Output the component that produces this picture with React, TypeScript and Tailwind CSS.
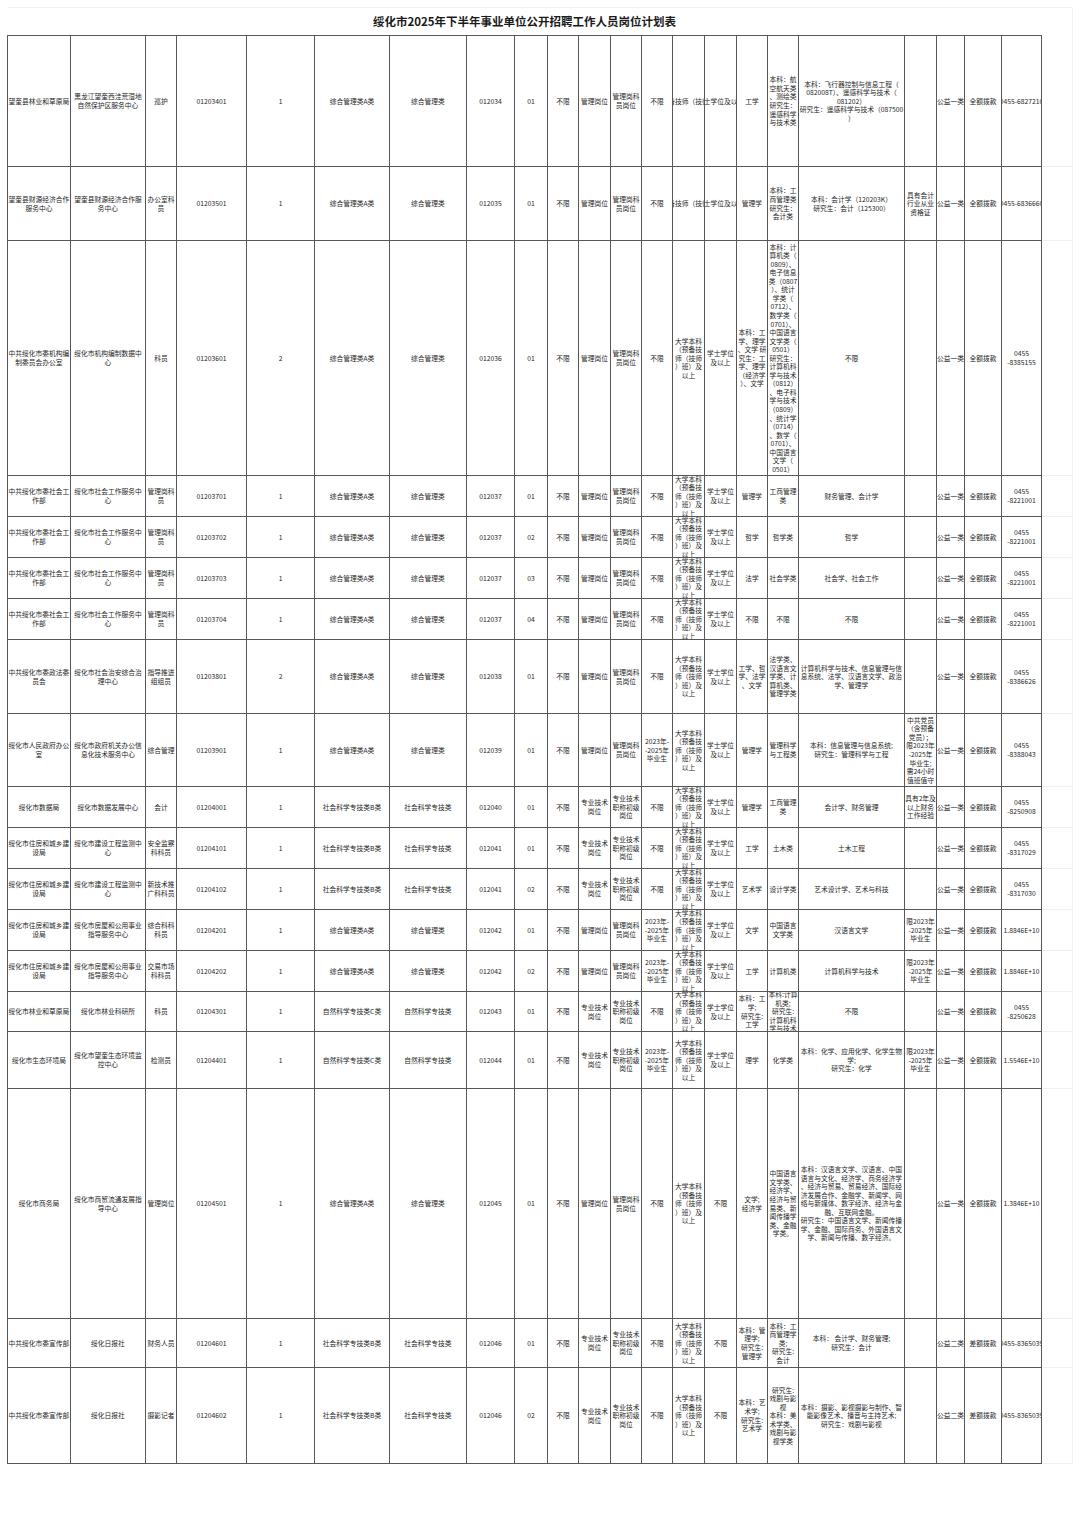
import React from 'react';

// 岗位计划表：每行 22 列，"\n" 为单元格内换行
const EDU1 = '大学本科（预备技师（技师）班）及以上';
const EDU = '大学本科\n（预备技\n师（技师\n）班）及\n以上';
const DEG = '学士学位\n及以上';
const GRAD = '2023年-\n-2025年\n毕业生';
const LIMIT_GRAD = '限2023年\n-2025年\n毕业生';
const GL = '管理岗科\n员岗位';
const ZJ = '专业技术\n岗位';
const ZC = '专业技术\n职称初级\n岗位';

const rows: string[][] = [
  ['望奎县林业和草原局', '黑龙江望奎西洼荒湿地\n自然保护区服务中心', '巡护', '01203401', '1', '综合管理类A类', '综合管理类', '012034', '01', '不限', '管理岗位', GL, '不限', EDU1, '学士学位及以上', '工学', '本科：航\n空航天类\n、测绘类\n研究生：\n遥感科学\n与技术类', '本科：飞行器控制与信息工程（\n082008T）、遥感科学与技术（\n081202）\n研究生：遥感科学与技术（087500\n）', '', '公益一类', '全额拨款', '0455-6827210'],
  ['望奎县财源经济合作\n服务中心', '望奎县财源经济合作服\n务中心', '办公室科\n员', '01203501', '1', '综合管理类A类', '综合管理类', '012035', '01', '不限', '管理岗位', GL, '不限', EDU1, '学士学位及以上', '管理学', '本科：工\n商管理类\n研究生：\n会计类', '本科：会计学（120203K）\n研究生：会计（125300）', '具有会计\n行业从业\n资格证', '公益一类', '全额拨款', '0455-6836660'],
  ['中共绥化市委机构编\n制委员会办公室', '绥化市机构编制数据中\n心', '科员', '01203601', '2', '综合管理类A类', '综合管理类', '012036', '01', '不限', '管理岗位', GL, '不限', EDU, DEG, '本科：工\n学、理学\n、文学 研\n究生：工\n学、理学\n（经济学\n）、文学', '本科：计\n算机类（\n0809）、\n电子信息\n类（0807\n）、统计\n学类（\n0712）、\n数学类（\n0701）、\n中国语言\n文学类（\n0501）\n研究生：\n计算机科\n学与技术\n（0812）\n、电子科\n学与技术\n（0809）\n、统计学\n（0714）\n、数学（\n0701）、\n中国语言\n文学（\n0501）', '不限', '', '公益一类', '全额拨款', '0455\n-8385155'],
  ['中共绥化市委社会工\n作部', '绥化市社会工作服务中\n心', '管理岗科\n员', '01203701', '1', '综合管理类A类', '综合管理类', '012037', '01', '不限', '管理岗位', GL, '不限', EDU, DEG, '管理学', '工商管理\n类', '财务管理、会计学', '', '公益一类', '全额拨款', '0455\n-8221001'],
  ['中共绥化市委社会工\n作部', '绥化市社会工作服务中\n心', '管理岗科\n员', '01203702', '1', '综合管理类A类', '综合管理类', '012037', '02', '不限', '管理岗位', GL, '不限', EDU, DEG, '哲学', '哲学类', '哲学', '', '公益一类', '全额拨款', '0455\n-8221001'],
  ['中共绥化市委社会工\n作部', '绥化市社会工作服务中\n心', '管理岗科\n员', '01203703', '1', '综合管理类A类', '综合管理类', '012037', '03', '不限', '管理岗位', GL, '不限', EDU, DEG, '法学', '社会学类', '社会学、社会工作', '', '公益一类', '全额拨款', '0455\n-8221001'],
  ['中共绥化市委社会工\n作部', '绥化市社会工作服务中\n心', '管理岗科\n员', '01203704', '1', '综合管理类A类', '综合管理类', '012037', '04', '不限', '管理岗位', GL, '不限', EDU, DEG, '不限', '不限', '不限', '', '公益一类', '全额拨款', '0455\n-8221001'],
  ['中共绥化市委政法委\n员会', '绥化市社会治安综合治\n理中心', '指导推进\n组组员', '01203801', '2', '综合管理类A类', '综合管理类', '012038', '01', '不限', '管理岗位', GL, '不限', EDU, DEG, '工学、哲\n学、法学\n、文学', '法学类、\n汉语言文\n学类、计\n算机类、\n管理学类', '计算机科学与技术、信息管理与信\n息系统、法学、汉语言文学、政治\n学、管理学', '', '公益一类', '全额拨款', '0455\n-8386626'],
  ['绥化市人民政府办公\n室', '绥化市政府机关办公信\n息化技术服务中心', '综合管理', '01203901', '1', '综合管理类A类', '综合管理类', '012039', '01', '不限', '管理岗位', GL, GRAD, EDU, DEG, '管理学', '管理科学\n与工程类', '本科：信息管理与信息系统;\n研究生：管理科学与工程', '中共党员\n（含预备\n党员）；\n限2023年\n-2025年\n毕业生;\n需24小时\n值班值守', '公益一类', '全额拨款', '0455\n-8388043'],
  ['绥化市数据局', '绥化市数据发展中心', '会计', '01204001', '1', '社会科学专技类B类', '社会科学专技类', '012040', '01', '不限', ZJ, ZC, '不限', EDU, DEG, '管理学', '工商管理\n类', '会计学、财务管理', '具有2年及\n以上财务\n工作经验', '公益一类', '全额拨款', '0455\n-8250908'],
  ['绥化市住房和城乡建\n设局', '绥化市建设工程监测中\n心', '安全监察\n科科员', '01204101', '1', '社会科学专技类B类', '社会科学专技类', '012041', '01', '不限', ZJ, ZC, '不限', EDU, DEG, '工学', '土木类', '土木工程', '', '公益一类', '全额拨款', '0455\n-8317029'],
  ['绥化市住房和城乡建\n设局', '绥化市建设工程监测中\n心', '新技术推\n广科科员', '01204102', '1', '社会科学专技类B类', '社会科学专技类', '012041', '02', '不限', ZJ, ZC, '不限', EDU, DEG, '艺术学', '设计学类', '艺术设计学、艺术与科技', '', '公益一类', '全额拨款', '0455\n-8317030'],
  ['绥化市住房和城乡建\n设局', '绥化市房屋和公用事业\n指导服务中心', '综合科科\n科员', '01204201', '1', '综合管理类A类', '综合管理类', '012042', '01', '不限', '管理岗位', GL, GRAD, EDU, DEG, '文学', '中国语言\n文学类', '汉语言文学', LIMIT_GRAD, '公益一类', '全额拨款', '1.8846E+10'],
  ['绥化市住房和城乡建\n设局', '绥化市房屋和公用事业\n指导服务中心', '交易市场\n科科员', '01204202', '1', '综合管理类A类', '综合管理类', '012042', '02', '不限', '管理岗位', GL, GRAD, EDU, DEG, '工学', '计算机类', '计算机科学与技术', LIMIT_GRAD, '公益一类', '全额拨款', '1.8846E+10'],
  ['绥化市林业和草原局', '绥化市林业科研所', '科员', '01204301', '1', '自然科学专技类C类', '自然科学专技类', '012043', '01', '不限', ZJ, ZC, '不限', EDU, DEG, '本科：工\n学;\n研究生:\n工学', '本科:计算\n机类;\n研究生:\n计算机科\n学与技术', '不限', '', '公益一类', '全额拨款', '0455\n-8250628'],
  ['绥化市生态环境局', '绥化市望奎生态环境监\n控中心', '检测员', '01204401', '1', '自然科学专技类C类', '自然科学专技类', '012044', '01', '不限', ZJ, ZC, GRAD, EDU, DEG, '理学', '化学类', '本科：化学、应用化学、化学生物\n学;\n研究生：化学', LIMIT_GRAD, '公益一类', '全额拨款', '1.5546E+10'],
  ['绥化市商务局', '绥化市商贸流通发展指\n导中心', '管理岗位', '01204501', '1', '综合管理类A类', '综合管理类', '012045', '01', '不限', '管理岗位', GL, '不限', EDU, '不限', '文学;\n经济学', '中国语言\n文学类、\n经济学、\n经济与贸\n易类、新\n闻传播学\n类、金融\n学类。', '本科：汉语言文学、汉语言、中国\n语言与文化、经济学、商务经济学\n、经济与贸易、贸易经济、国际经\n济发展合作、金融学、新闻学、网\n络与新媒体、数字经济、经济与金\n融、互联网金融。\n研究生：中国语言文学、新闻传播\n学、金融、国际商务、外国语言文\n学、新闻与传播、数字经济。', '', '公益一类', '全额拨款', '1.3846E+10'],
  ['中共绥化市委宣传部', '绥化日报社', '财务人员', '01204601', '1', '社会科学专技类B类', '社会科学专技类', '012046', '01', '不限', ZJ, ZC, '不限', EDU, '不限', '本科：管\n理学;\n研究生:\n管理学', '本科：工\n商管理学\n类;\n研究生:\n会计', '本科： 会计学、财务管理;\n研究生：会计', '', '公益二类', '差额拨款', '0455-8365039'],
  ['中共绥化市委宣传部', '绥化日报社', '摄影记者', '01204602', '1', '社会科学专技类B类', '社会科学专技类', '012046', '02', '不限', ZJ, ZC, '不限', EDU, '不限', '本科：艺\n术学;\n研究生:\n艺术学', '研究生:\n戏剧与影\n视\n本科：美\n术学类、\n戏剧与影\n视学类', '本科：摄影、影视摄影与制作、智\n能影像艺术、播音与主持艺术;\n研究生：戏剧与影视', '', '公益二类', '差额拨款', '0455-8365039'],
];

const App: React.FC = () => {
  return (
    <div className="bg-white w-[1080px] h-[1522px] pt-[7px] pl-[7px] text-[#262626] font-['Noto_Sans_CJK_SC','Noto_Sans',sans-serif]">
      <div className="flex">
        <div className="w-[1035px]">
          {/* 标题 */}
          <div className="h-[28px] border-t border-[#f1f1f1] flex items-center justify-center text-[11.5px] font-bold text-[#1a1a1a]">
            绥化市2025年下半年事业单位公开招聘工作人员岗位计划表
          </div>

          <div className="grid grid-cols-[63px_75px_31px_70px_68px_75px_77px_48px_33px_31px_32px_31px_31px_32px_32px_31px_31px_106px_32px_28px_37px_40px] grid-rows-[131px_74px_235px_41px_41px_41px_41px_74px_73px_41px_41px_41px_41px_41px_40px_57px_230px_49px_96px] border-l border-t border-[#575757] text-[6.75px] leading-[8.55px]">
            {rows.map((row, i) =>
              row.map((cell, j) => (
                <div
                  key={`${i}-${j}`}
                  className="flex items-center justify-center overflow-hidden border-r border-b border-[#575757] text-center"
                >
                  <span className="whitespace-pre">{cell}</span>
                </div>
              ))
            )}
          </div>
        </div>

        {/* 右侧浅色空列 */}
        <div className="w-[31px]">
          <div className="h-[28px] border-t border-r border-[#f1f1f1]" />
          <div className="h-[1px] border-r border-[#f1f1f1]" />
          <div className="grid grid-rows-[131px_74px_235px_41px_41px_41px_41px_74px_73px_41px_41px_41px_41px_41px_40px_57px_230px_49px_96px]">
            {rows.map((_, i) => (
              <div key={i} className="border-r border-b border-[#f1f1f1]" />
            ))}
          </div>
        </div>
      </div>
    </div>
  );
};

export default App;
